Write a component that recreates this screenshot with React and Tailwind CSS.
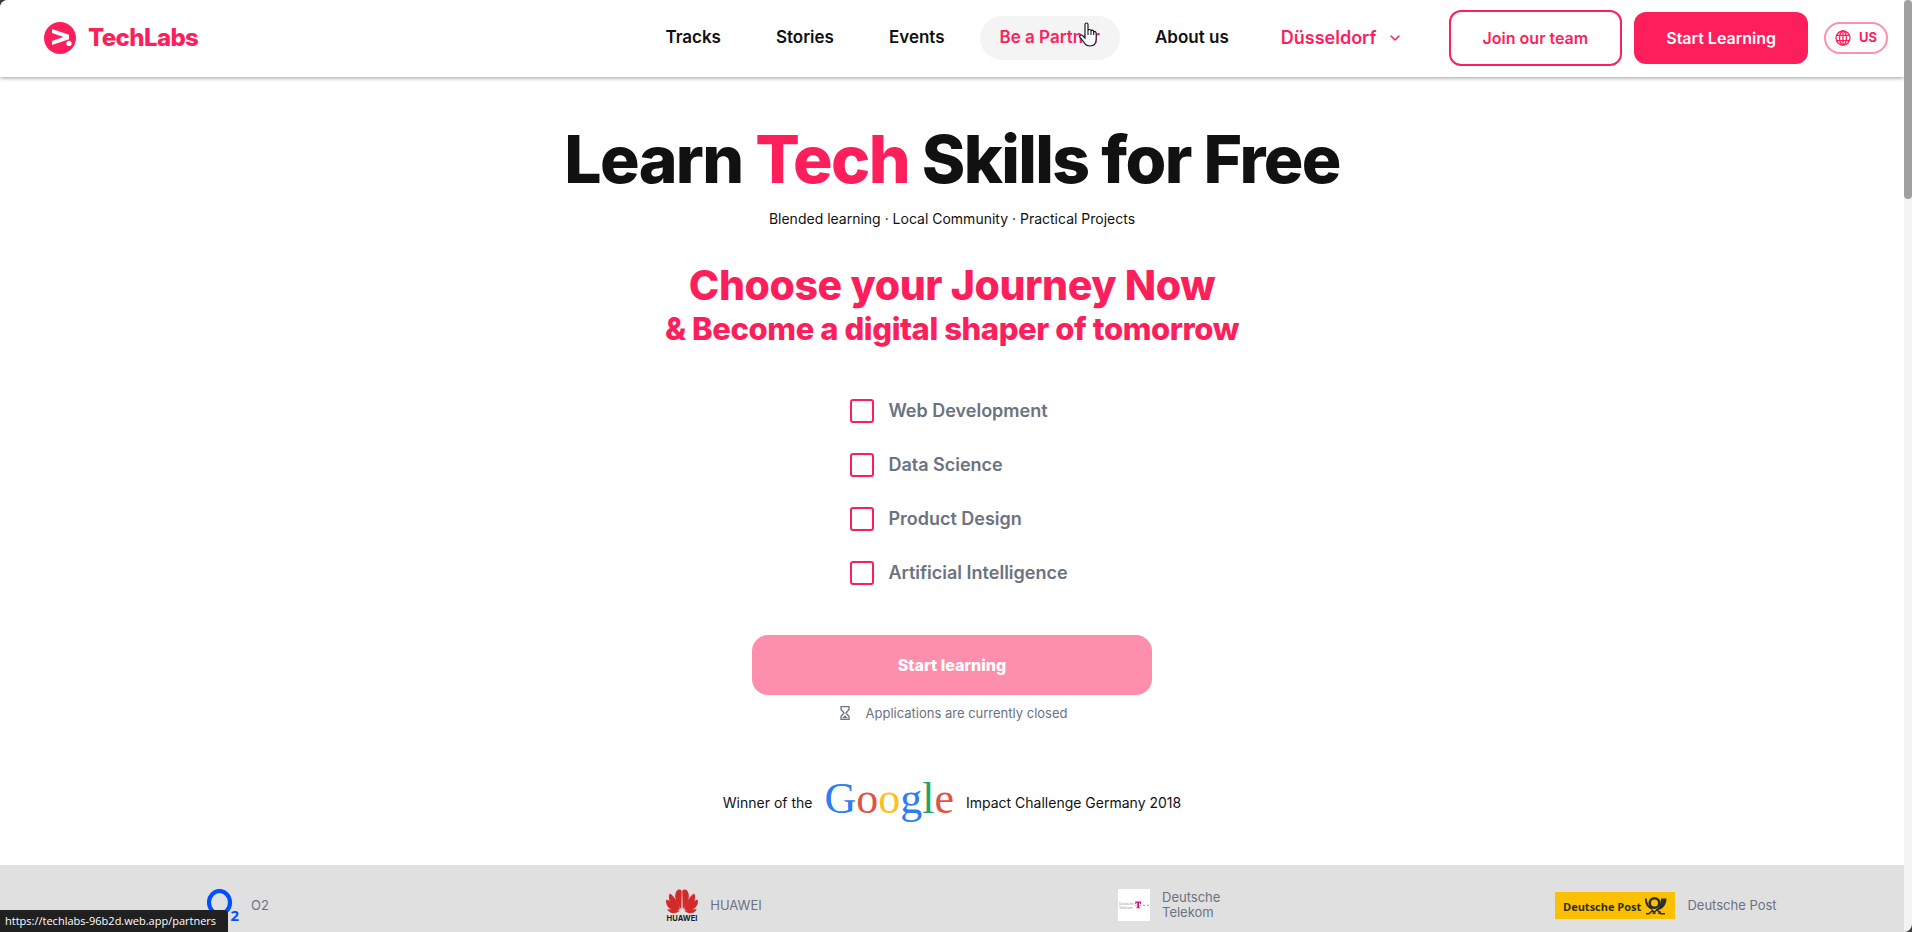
import React from "react";
import { ChevronDown } from "lucide-react";

const navItems = ["Tracks", "Stories", "Events", "Be a Partner", "About us"];
const tracks = ["Web Development", "Data Science", "Product Design", "Artificial Intelligence"];

function TechLabsMark() {
  return (
    <svg viewBox="0 0 32 32" className="size-8" aria-hidden="true">
      <circle cx="16" cy="16" r="16" fill="#fd1f5c" />
      <path d="M8 7 L25 12.8 V17.2 L8 23 V19 L19.5 15 L8 11 Z" fill="#fff" />
      <circle cx="25" cy="21.4" r="2.6" fill="#fff" />
    </svg>
  );
}

function GridGlobe() {
  return (
    <svg viewBox="0 0 16 16" className="size-4" fill="none" stroke="currentColor" strokeWidth="1.3" aria-hidden="true">
      <circle cx="8" cy="8" r="7" />
      <ellipse cx="8" cy="8" rx="3.4" ry="7" />
      <path d="M8 1V15M1.8 5.4H14.2M1.8 10.6H14.2" />
    </svg>
  );
}

function Hourglass() {
  return (
    <svg viewBox="0 0 10 14" className="h-3.5 w-2.5" fill="none" stroke="#6b7280" strokeWidth="1.3" aria-hidden="true">
      <path d="M1 .7H9V3.5L6 7L9 10.5V13.3H1V10.5L4 7L1 3.5Z" />
      <path d="M2.5 12L5 9.5L7.500 12Z" fill="#6b7280" strokeWidth=".4" />
    </svg>
  );
}

function GoogleWordmark() {
  return (
    <span className="block pb-2 font-['Liberation_Serif',serif] text-[44px] leading-9">
      <span className="text-[#2f7df0]">G</span>
      <span className="text-[#dc5545]">o</span>
      <span className="text-[#fdbf1b]">o</span>
      <span className="text-[#2f7df0]">g</span>
      <span className="text-[#1fa463]">l</span>
      <span className="text-[#dc5545]">e</span>
    </span>
  );
}

function O2Logo() {
  return (
    <svg viewBox="0 0 32 32" className="size-8" aria-hidden="true">
      <ellipse cx="12.500" cy="13.500" rx="10.500" ry="11.500" fill="none" stroke="#0050ff" strokeWidth="4.200" />
      <text x="23.500" y="31.500" fontFamily="Open Sans, sans-serif" fontWeight="700" fontSize="15" fill="#0050ff">2</text>
    </svg>
  );
}

const petals = [
  { d: "M15.300 20C8.500 14 7.500 4.500 11.500 1C14.800 -.2 15.700 1.500 15.700 3Z" },
  { d: "M14.300 20.500C6 17.500 1 11 3.500 4.800C5.500 4.500 10.500 10 14.300 20.500Z" },
  { d: "M13.600 21.500C6 22.500 -1 18 .2 10.800C4.500 11 10 15.500 13.600 21.500Z" },
  { d: "M13.300 22.300C9 25.500 3.500 24.800 1.200 20.300C6 20 10 20.500 13.300 22.300Z" },
];

function HuaweiLogo() {
  return (
    <svg viewBox="0 0 32 32" className="size-8" aria-hidden="true">
      <g fill="#d42a2a">
        {petals.map((p) => <path key={p.d} d={p.d} />)}
        <g transform="translate(32 0) scale(-1 1)">
          {petals.map((p) => <path key={p.d} d={p.d} />)}
        </g>
      </g>
      <text x="16" y="31.500" textAnchor="middle" fontFamily="Inter, sans-serif" fontWeight="700" fontSize="7.600" fill="#1c1c1c">HUAWEI</text>
    </svg>
  );
}

function TelekomLogo() {
  return (
    <svg viewBox="0 0 32 32" className="size-8" aria-hidden="true">
      <rect width="32" height="32" fill="#fff" />
      <g fontFamily="Liberation Sans, sans-serif" fontSize="3.600" fill="#999">
        <text x="1" y="15.500">Deutsche</text>
        <text x="1" y="19.500">Telekom</text>
      </g>
      <path d="M17.300 12.500H23V15H22.300L21.500 13.500H21V18.500H22V19.300H18.300V18.500H19.300V13.500H18.800L18 15H17.300Z" fill="#e20074" />
      <path d="M17.300 16.300H18.700M22 16.300H23.400M25 16.300H27M29 16.300H31" stroke="#999" />
    </svg>
  );
}

function DeutschePostLogo() {
  return (
    <svg viewBox="0 0 120 27" className="h-[27px] w-[120px]" aria-hidden="true">
      <rect width="120" height="27" fill="#fbc100" />
      <text x="8" y="19" fontFamily="Open Sans, sans-serif" fontWeight="700" fontSize="11" fill="#2d2d2a">Deutsche Post</text>
      <g fill="none" stroke="#2d2d2a">
        <circle cx="99.500" cy="11" r="4.800" strokeWidth="2.600" />
        <path d="M90.800 6.500C91 12 93 15.500 97.500 17" strokeWidth="2" />
        <path d="M91 21.800H94L97.500 18.500L100.500 21.800M97.500 21.800L102 17.800L106 21.800H110M103.500 21.800L105.500 19.500" strokeWidth="1.500" />
      </g>
      <path d="M101 17.500C105.500 15.500 105.500 10 106 6.500H111.500C111.500 13 107.500 18 101 18.500Z" fill="#2d2d2a" />
    </svg>
  );
}

const partners = [
  { name: "O2", logo: <O2Logo /> },
  { name: "HUAWEI", logo: <HuaweiLogo /> },
  { name: "Deutsche Telekom", logo: <TelekomLogo /> },
  { name: "Deutsche Post", logo: <DeutschePostLogo /> },
];

function Header() {
  return (
    <header className="relative flex h-[77px] items-center justify-between bg-white pr-4 pb-0.5 pl-11 shadow-[0_1px_4px_rgba(0,0,0,0.4)]">
      <a href="#home" className="flex items-center gap-3 text-2xl font-extrabold tracking-tight text-[#fd1f5c]">
        <TechLabsMark />
        TechLabs
      </a>
      <div className="flex items-center">
        <nav className="flex items-center gap-[15px]">
          {navItems.map((item) => (
            <a
              key={item}
              href={item === "Be a Partner" ? "#partners" : "#"}
              className={
                item === "Be a Partner"
                  ? "flex h-11 items-center rounded-full bg-[#f4f4f4] px-5 text-[17px] font-semibold text-[#fd1f5c]"
                  : "flex h-11 items-center rounded-full px-5 text-[17px] font-semibold text-[#111]"
              }
            >
              {item}
            </a>
          ))}
        </nav>
        <button className="ml-8 flex items-center gap-2.5 text-lg font-semibold text-[#fd1f5c]">
          Düsseldorf
          <ChevronDown className="size-4" strokeWidth={2.2} />
        </button>
        <a href="#team" className="ml-[46px] rounded-xl border-2 border-[#fd1f5c] px-8 py-3.5 font-semibold text-[#fd1f5c]">
          Join our team
        </a>
        <a href="#learn" className="ml-3 rounded-xl bg-[#fd1f5c] px-8 py-3.5 font-semibold text-white">
          Start Learning
        </a>
        <button className="ml-4 flex h-8 w-16 items-center justify-center gap-2 rounded-full border-2 border-[#fe8fad] text-[13px] font-bold text-[#fd1f5c]">
          <GridGlobe />
          US
        </button>
      </div>
      <svg viewBox="0 0 18 25" className="absolute top-[22px] left-[1079px] h-[25px] w-[18px]" aria-hidden="true">
        <path d="M6 14V2.500C6 .5 9 .5 9 2.500V9C9 7 12 7 12 9C12.500 7.500 14.700 8 14.700 10C15.500 9 17.200 9.500 17.200 11.500V17C17.200 21 15 24 11 24C7 24 6 22 4 19L1 15.500C-.2 13.500 2.500 12 4 14L6 16Z" fill="#fff" stroke="#1a1a2a" strokeWidth="1.200" />
        <path d="M9 9V13M12 9V13M14.700 10V13" stroke="#1a1a2a" strokeWidth="1.100" />
      </svg>
    </header>
  );
}

export default function App() {
  return (
    <div className="flex h-screen overflow-hidden bg-[#3c3c3c] font-['Inter',sans-serif] text-base">
      <div className="relative flex flex-1 flex-col overflow-hidden rounded-tl-lg bg-white">
        <Header />
        <main className="flex flex-1 flex-col items-center text-center">
          <h1 className="mt-[42px] text-[66px] leading-[80px] font-extrabold tracking-tight text-[#111]">
            Learn <span className="text-[#fd1f5c]">Tech</span> Skills for Free
          </h1>
          <p className="mt-2.5 text-sm text-[#111]">Blended learning · Local Community · Practical Projects</p>
          <h2 className="mt-8 font-extrabold tracking-tight text-[#fd1f5c]">
            <span className="block text-[41px] leading-[48px]">Choose your Journey Now</span>
            <span className="block text-[31px] leading-10">&amp; Become a digital shaper of tomorrow</span>
          </h2>
          <form className="mt-[50px] flex flex-col items-center">
            <div className="flex flex-col gap-[30px] pl-3.5 text-left">
              {tracks.map((track) => (
                <label key={track} className="flex h-6 items-center gap-3.5 text-lg font-semibold text-[#6b7280]">
                  <input type="checkbox" className="size-6 appearance-none rounded-[3px] border-2 border-[#fd1f5c] bg-white" />
                  {track}
                </label>
              ))}
            </div>
            <button type="button" className="mt-[50px] h-[60px] w-[400px] rounded-2xl bg-[#fe8fac] font-extrabold text-white">
              Start learning
            </button>
            <p className="mt-2 flex items-center gap-4 pl-[3px] text-[13px] leading-5 text-[#6b7280]">
              <Hourglass />
              Applications are currently closed
            </p>
          </form>
          <p className="mt-[58px] flex items-center gap-3 text-sm text-[#111]">
            Winner of the
            <GoogleWordmark />
            Impact Challenge Germany 2018
          </p>
        </main>
        <ul className="grid h-[67px] grid-cols-4 items-start bg-[#e0e0e0] pt-6">
          {partners.map((p) => (
            <li key={p.name} className="flex h-8 items-center justify-center gap-3 text-[13px] leading-[15px] text-[#6b7280]">
              {p.logo}
              <span className="max-w-[100px]">{p.name}</span>
            </li>
          ))}
        </ul>
        <div className="absolute bottom-0 left-0 rounded-tr bg-[#202020] py-[3px] pr-3 pl-[5px] font-['Open_Sans',sans-serif] text-[11px] leading-4 text-white">
          https://techlabs-96b2d.web.app/partners
        </div>
      </div>
      <div className="w-2 overflow-hidden rounded-br-lg bg-[#f3f3f3]" aria-hidden="true">
        <div className="h-[199px] rounded-full bg-[#a0a0a0]" />
      </div>
    </div>
  );
}
